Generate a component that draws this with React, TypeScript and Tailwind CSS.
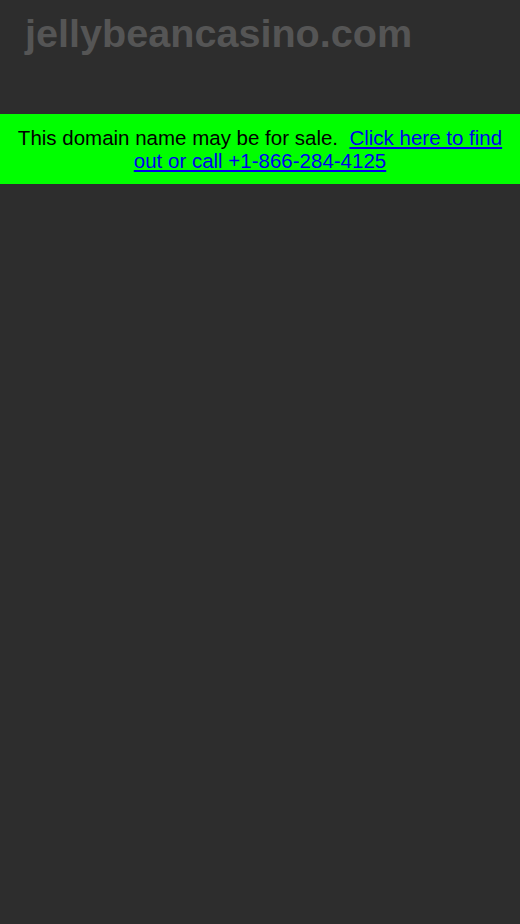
import React from 'react';

const App: React.FC = () => {
  return (
    <div className="min-h-screen bg-[#2d2d2d] font-['Liberation_Sans',Arial,sans-serif]">
      <header className="h-[114px] px-[25px] pt-[9px]">
        <h1 className="text-[39.6px] leading-[48px] font-bold text-[#555555]">jellybeancasino.com</h1>
      </header>
      <div className="bg-[#00ff00] h-[70px] flex items-center justify-center px-2 text-center">
        <p className="text-[20.5px] leading-[23px] text-black">
          This domain name may be for sale.&nbsp;{' '}
          <a href="#" className="text-[#0000ee] underline">
            Click here to find out or call +1-866-284-4125
          </a>
        </p>
      </div>
    </div>
  );
};

export default App;
